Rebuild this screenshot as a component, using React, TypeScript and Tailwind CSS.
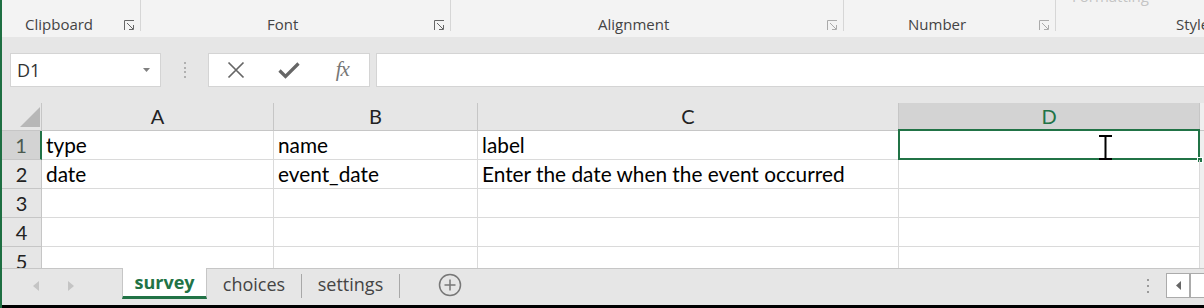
import React from "react";

const ui = { fontFamily: '"Open Sans", "Noto Sans", sans-serif' };
const cellFont = { fontFamily: 'Lato, "Open Sans", sans-serif' };

function Launcher({ color = "#777" }: { color?: string }) {
  return (
    <svg width="11" height="11" viewBox="0 0 11 11" fill="none" stroke={color} strokeWidth="1">
      <path d="M0.5 10 V0.5 H10" />
      <path d="M3 3 L9 9" />
      <path d="M9.5 5 V9.5 H5" />
    </svg>
  );
}

function Group({
  width,
  label,
  pad,
  launcher,
}: {
  width: string;
  label: string;
  pad: string;
  launcher: string;
}) {
  return (
    <div className={`flex shrink-0 h-full ${width}`}>
      <div className={`pt-[14px] leading-[20px] text-[15px] text-[#444] whitespace-nowrap ${pad}`}>{label}</div>
      <div className="flex-1" />
      <div className="pt-[20px] pr-[5px]">
        <Launcher color={launcher} />
      </div>
      <div className="w-px h-[31px] bg-[#d6d6d6]" />
    </div>
  );
}

function Ribbon() {
  return (
    <div className="h-[37px] bg-[#f3f3f3] flex overflow-hidden" style={ui}>
      <Group width="w-[139px]" label="Clipboard" pad="pl-[23px]" launcher="#666" />
      <Group width="w-[310px]" label="Font" pad="pl-[126px]" launcher="#666" />
      <Group width="w-[393px]" label="Alignment" pad="pl-[147px]" launcher="#aaa" />
      <Group width="w-[212px]" label="Number" pad="pl-[64px]" launcher="#aaa" />
      <div className="flex-1 relative">
        <div className="-mt-[14px] ml-[16px] text-[15px] leading-[20px] text-[#c4c4c4]">Formatting</div>
        <div className="mt-[8px] ml-[120px] text-[15px] leading-[20px] text-[#444] whitespace-nowrap">Styles</div>
      </div>
    </div>
  );
}

function FormulaBar() {
  return (
    <div className="h-[66px] bg-[#e6e6e6] flex items-start pt-[16px]" style={ui}>
      <div className="ml-[8px] w-[151px] h-[34px] shrink-0 bg-white border border-[#d4d4d4] flex items-center pl-[6px] pr-[10px]">
        <span className="text-[18px] text-[#333]">D1</span>
        <svg className="ml-auto" width="7" height="4" viewBox="0 0 7 4">
          <path d="M0 0 H7 L3.5 4 Z" fill="#808080" />
        </svg>
      </div>
      <div className="w-[47px] shrink-0 flex justify-center pt-[9px]">
        <div className="w-[3px] h-[16px] flex flex-col justify-between items-center">
          <div className="w-[2px] h-[2px] bg-[#b0b0b0]" />
          <div className="w-[2px] h-[2px] bg-[#b0b0b0]" />
          <div className="w-[2px] h-[2px] bg-[#b0b0b0]" />
          <div className="w-[2px] h-[2px] bg-[#b0b0b0]" />
        </div>
      </div>
      <div className="w-[162px] h-[34px] shrink-0 bg-white border border-[#d4d4d4] grid grid-cols-3 items-center justify-items-center">
        <svg width="18" height="18" viewBox="0 0 18 18">
          <path d="M1.5 1.5 L16.5 16.5 M16.5 1.5 L1.5 16.5" stroke="#666" strokeWidth="1.7" />
        </svg>
        <svg width="22" height="17" viewBox="0 0 22 17">
          <path d="M1.5 8.5 L7.5 14.5 L20.5 1.5" stroke="#666" strokeWidth="3.2" fill="none" />
        </svg>
        <span
          className="italic text-[21px] leading-[20px] text-[#777] tracking-[-1px] pb-[2px]"
          style={{ fontFamily: '"Liberation Serif", "DejaVu Serif", serif' }}
        >
          fx
        </span>
      </div>
      <div className="ml-[6px] flex-1 h-[34px] bg-white border border-r-0 border-[#d4d4d4]" />
    </div>
  );
}

const cols = ["w-[232px]", "w-[204px]", "w-[421px]", "w-[301px]"];
const rows = [
  ["type", "name", "label", ""],
  ["date", "event_date", "Enter the date when the event occurred", ""],
  ["", "", "", ""],
  ["", "", "", ""],
  ["", "", "", ""],
];

function Grid() {
  return (
    <div className="h-[165px] overflow-hidden bg-white" style={cellFont}>
      <div className="flex h-[28px]">
        <div className="w-[40px] shrink-0 bg-[#e6e6e6] border-r border-b border-[#c6c6c6] flex justify-end items-end pr-[1px] pb-[3px]">
          <svg width="20" height="20" viewBox="0 0 20 20">
            <path d="M20 0 V20 H0 Z" fill="#b7b7b7" />
          </svg>
        </div>
        {["A", "B", "C"].map((l, i) => (
          <div
            key={l}
            className={`${cols[i]} shrink-0 bg-[#e6e6e6] border-r border-b border-[#c6c6c6] text-center text-[20px] leading-[27px] text-[#222]`}
          >
            {l}
          </div>
        ))}
        <div className="w-[301px] shrink-0 bg-[#d3d3d3] border-r border-[#c6c6c6] border-b-2 border-b-[#217346] text-center text-[20px] leading-[26px] text-[#217346]">
          D
        </div>
        <div className="flex-1 bg-[#efefef] border-b border-[#c6c6c6]" />
      </div>
      {rows.map((r, ri) => (
        <div key={ri} className="flex h-[29px]">
          <div
            className={`w-[40px] shrink-0 border-b border-[#c6c6c6] text-center text-[20px] leading-[28px] ${
              ri === 0
                ? "bg-[#d3d3d3] border-r-2 border-r-[#217346] text-[#4b5a50]"
                : "bg-[#e6e6e6] border-r border-r-[#c6c6c6] text-[#222]"
            }`}
          >
            {ri + 1}
          </div>
          {r.map((c, ci) => (
            <div
              key={ci}
              className={`${cols[ci]} shrink-0 relative border-r border-b border-[#dadada] pl-[4px] text-[20.8px] leading-[28px] text-black whitespace-nowrap`}
            >
              {c}
              {ri === 0 && ci === 3 && (
                <>
                  <div className="absolute -left-px -top-[2px] -right-px -bottom-px border-2 border-[#217346]" />
                  <div className="absolute -right-[4px] -bottom-[4px] w-[6px] h-[6px] bg-[#217346] border border-white" />
                  <svg className="absolute left-[199px] top-[4px]" width="15" height="25" viewBox="0 0 15 25">
                    <path d="M1 1 H14 M7.5 1 V24 M1 24 H14" stroke="#000" strokeWidth="2" />
                  </svg>
                </>
              )}
            </div>
          ))}
          <div className="flex-1 bg-[#efefef]" />
        </div>
      ))}
    </div>
  );
}

function Tabs() {
  return (
    <div className="h-[37px] bg-[#e6e6e6] flex items-start border-t border-[#c6c6c6]" style={ui}>
      <div className="w-[120px] shrink-0 flex items-center pt-[12px] pl-[31px] gap-[29px]">
        <svg width="6" height="10" viewBox="0 0 6 10">
          <path d="M6 0 V10 L0 5 Z" fill="#c4c4c4" />
        </svg>
        <svg width="6" height="10" viewBox="0 0 6 10">
          <path d="M0 0 V10 L6 5 Z" fill="#c4c4c4" />
        </svg>
      </div>
      <div className="-mt-px w-[85px] h-[31px] shrink-0 bg-white border-x border-[#c6c6c6] border-b-[3px] border-b-[#217346] flex items-center justify-center font-bold text-[18px] text-[#217346]">
        survey
      </div>
      <div className="w-[94px] h-[30px] shrink-0 flex items-center justify-center text-[18px] text-[#444]">choices</div>
      <div className="w-px h-[24px] mt-[5px] bg-[#a8a8a8]" />
      <div className="w-[97px] h-[30px] shrink-0 flex items-center justify-center text-[18px] text-[#444]">settings</div>
      <div className="w-px h-[24px] mt-[5px] bg-[#a8a8a8]" />
      <div className="ml-[38px] mt-[4px]">
        <svg width="24" height="24" viewBox="0 0 24 24" fill="none" stroke="#777" strokeWidth="1.5">
          <circle cx="12" cy="12" r="10.5" />
          <path d="M12 6.5 V17.5 M6.5 12 H17.5" />
        </svg>
      </div>
      <div className="ml-auto flex items-start">
        <div className="mt-[10px] flex flex-col gap-[4px] mr-[17px]">
          <div className="w-[2px] h-[2px] bg-[#9a9a9a]" />
          <div className="w-[2px] h-[2px] bg-[#9a9a9a]" />
          <div className="w-[2px] h-[2px] bg-[#9a9a9a]" />
        </div>
        <div className="mt-[4px] w-[24px] h-[25px] bg-white border border-[#ababab] flex items-center justify-center">
          <svg width="5" height="9" viewBox="0 0 5 9">
            <path d="M5 0 V9 L0 4.5 Z" fill="#666" />
          </svg>
        </div>
        <div className="mt-[4px] w-[14px] h-[25px] bg-white border-y border-l border-[#ababab]" />
      </div>
    </div>
  );
}

export default function App() {
  return (
    <div className="w-[1204px] h-[308px] overflow-hidden border-l-2 border-[#1e6f42] bg-[#e6e6e6] flex flex-col">
      <Ribbon />
      <FormulaBar />
      <Grid />
      <Tabs />
      <div className="h-[3px] bg-black" />
    </div>
  );
}
